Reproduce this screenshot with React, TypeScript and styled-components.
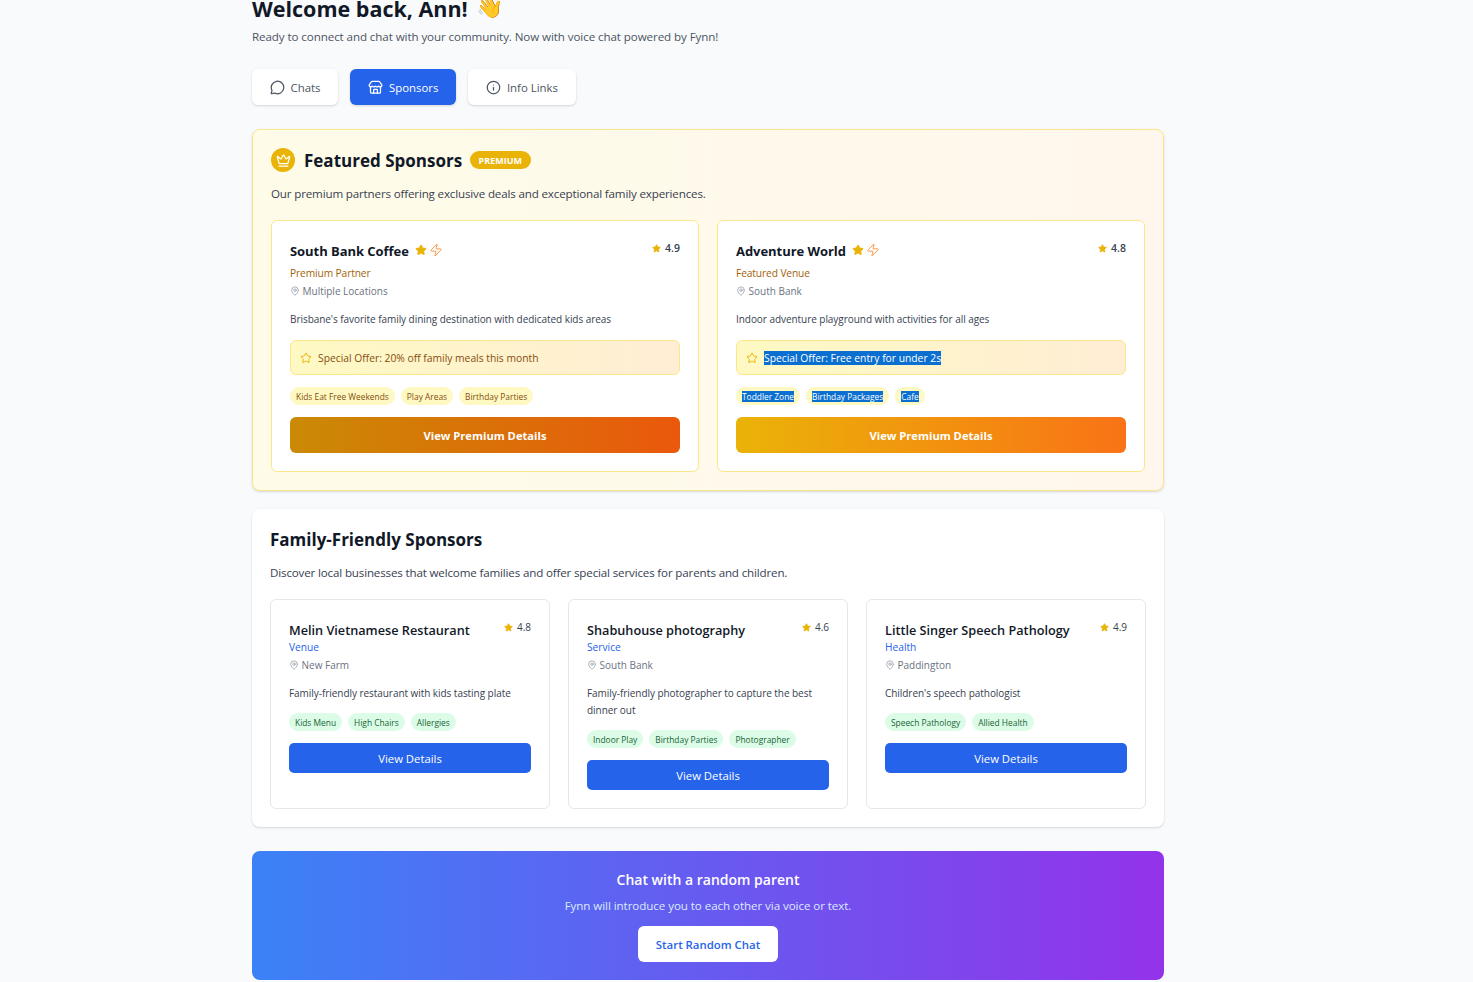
import React from 'react';
import styled, { createGlobalStyle } from 'styled-components';
import { MessageCircle, Store, Info, Crown, Star, Zap, MapPin } from 'lucide-react';

const Global = createGlobalStyle`
  html, body { margin: 0; padding: 0; background: #f9fafb; overflow: hidden; height: 982px; }
  body { font-family: "Open Sans", "Noto Sans", sans-serif; color: #111827; }
  * { box-sizing: border-box; }
`;

const Page = styled.main`
  width: 912px;
  margin: -7px 0 0 252px;
  display: flex;
  flex-direction: column;
`;
const Title = styled.h1`
  margin: 0;
  font-size: 21.5px;
  line-height: 32px;
  font-weight: 700;
  color: #111827;
  display: flex;
  gap: 9px;
`;
const Wave = styled.span`
  font-size: 22px;
  line-height: 28px;
  font-family: "Noto Color Emoji", sans-serif;
`;
const Subtitle = styled.p`
  margin: 2px 0 0;
  font-size: 11.6px;
  letter-spacing: -0.09px;
  line-height: 20px;
  color: #4b5563;
`;
const Tabs = styled.nav`
  display: flex;
  gap: 12px;
  margin-top: 22px;
`;
const Tab = styled.div<{ $active?: boolean }>`
  height: 36px;
  padding: 0 18px;
  display: flex;
  align-items: center;
  gap: 5.5px;
  border-radius: 6px;
  font-size: 11.4px;
  color: ${p => (p.$active ? '#fff' : '#4b5563')};
  background: ${p => (p.$active ? '#2563eb' : '#fff')};
  box-shadow: 0 1px 3px rgba(0,0,0,.1), 0 1px 2px rgba(0,0,0,.06);
`;
const Featured = styled.section`
  margin-top: 24px;
  height: 362px;
  padding: 18px;
  border: 1px solid #fde68a;
  border-radius: 8px;
  background: linear-gradient(90deg, #fefce8, #fff7ed);
  box-shadow: 0 1px 3px rgba(0,0,0,.1), 0 1px 2px rgba(0,0,0,.06);
`;
const FeaturedHead = styled.div`
  display: flex;
  align-items: center;
  height: 24px;
`;
const CrownBadge = styled.span`
  width: 24px;
  height: 24px;
  border-radius: 50%;
  background: #eab308;
  color: #fff;
  display: flex;
  align-items: center;
  justify-content: center;
  margin-right: 9px;
`;
const SectionTitle = styled.h2`
  margin: 0;
  padding-top: 1px;
  font-size: 17px;
  line-height: 23px;
  font-weight: 700;
  color: #111827;
`;
const Premium = styled.span`
  margin-left: 8px;
  height: 18px;
  padding: 0 8.5px;
  border-radius: 9px;
  background: #eab308;
  color: #fff;
  font-size: 9px;
  font-weight: 700;
  display: flex;
  align-items: center;
`;
const SectionText = styled.p`
  margin: 12px 0 0;
  font-size: 11.6px;
  letter-spacing: -0.16px;
  line-height: 20px;
  color: #374151;
`;
const TwoCols = styled.div`
  display: grid;
  grid-template-columns: 428px 428px;
  gap: 18px;
  margin-top: 16px;
`;
const PremiumCard = styled.article`
  height: 252px;
  padding: 18px;
  background: #fff;
  border: 1px solid #fde68a;
  border-radius: 6px;
`;
const CardTop = styled.div`
  display: flex;
  justify-content: space-between;
  align-items: flex-start;
`;
const NameRow = styled.div`
  display: flex;
  align-items: center;
  height: 24px;
`;
const Marks = styled.div`
  display: flex;
  align-items: center;
  gap: 2px;
  margin: 0 0 3px 6px;
`;
const CardName = styled.h3<{ $bold?: boolean }>`
  margin: 0;
  font-size: ${p => (p.$bold ? '13px' : '12.7px')};
  letter-spacing: ${p => (p.$bold ? '-0.05px' : '0')};
  line-height: 24px;
  font-weight: ${p => (p.$bold ? 700 : 600)};
  color: #111827;
`;
const Rating = styled.div<{ $bold?: boolean }>`
  display: flex;
  align-items: center;
  gap: 4px;
  margin-top: 1px;
  font-size: ${p => (p.$bold ? '10.5px' : '10px')};
  line-height: 16px;
  font-weight: ${p => (p.$bold ? 600 : 400)};
  color: #374151;
`;
const Kind = styled.div<{ $premium?: boolean }>`
  font-size: 10.2px;
  letter-spacing: ${p => (p.$premium ? '-0.1px' : '0')};
  line-height: 16px;
  font-weight: ${p => (p.$premium ? 500 : 400)};
  color: ${p => (p.$premium ? '#a16207' : '#2563eb')};
  margin-top: ${p => (p.$premium ? '2px' : '-3px')};
`;
const Location = styled.div`
  display: flex;
  align-items: center;
  gap: 2.5px;
  margin-top: 2px;
  font-size: 10px;
  line-height: 16px;
  color: #6b7280;
`;
const Desc = styled.p`
  margin: 12px 0 0;
  font-size: 10px;
  letter-spacing: -0.05px;
  line-height: 17px;
  color: #374151;
`;
const Offer = styled.div`
  margin-top: 12px;
  height: 35px;
  padding: 0 9px;
  display: flex;
  align-items: center;
  gap: 6px;
  border: 1px solid #fde68a;
  border-radius: 6px;
  background: linear-gradient(90deg, #fef9c3, #ffedd5);
  font-size: 10.3px;
  font-weight: 500;
  color: #854d0e;
`;
const Chips = styled.div<{ $tight?: boolean }>`
  display: flex;
  gap: 6px;
  margin-top: ${p => (p.$tight ? '11px' : '12px')};
`;
const Chip = styled.span<{ $green?: boolean }>`
  height: 18px;
  padding: 0 6px;
  display: flex;
  align-items: center;
  border-radius: 9px;
  font-size: 8.4px;
  background: ${p => (p.$green ? '#dcfce7' : '#fef9c3')};
  color: ${p => (p.$green ? '#166534' : '#854d0e')};
`;
const Selected = styled.span`
  background: #0a6fd1;
  color: #fff;
`;
const PremiumButton = styled.div<{ $from: string; $to: string }>`
  margin-top: 12px;
  height: 36px;
  border-radius: 6px;
  display: flex;
  align-items: center;
  justify-content: center;
  color: #fff;
  font-size: 11.2px;
  font-weight: 700;
  background: linear-gradient(90deg, ${p => p.$from}, ${p => p.$to});
`;
const Family = styled.section`
  margin-top: 18px;
  height: 318px;
  padding: 18px;
  background: #fff;
  border-radius: 8px;
  box-shadow: 0 1px 3px rgba(0,0,0,.1), 0 1px 2px rgba(0,0,0,.06);
`;
const ThreeCols = styled.div`
  display: grid;
  grid-template-columns: repeat(3, 280px);
  gap: 18px;
  margin-top: 16px;
`;
const SponsorCard = styled.article`
  height: 210px;
  padding: 18px;
  border: 1px solid #e5e7eb;
  border-radius: 6px;
  background: #fff;
`;
const DetailsButton = styled.div`
  margin-top: 12px;
  height: 30px;
  border-radius: 5px;
  background: #2563eb;
  color: #fff;
  font-size: 11.3px;
  display: flex;
  align-items: center;
  justify-content: center;
`;
const Cta = styled.section`
  margin-top: 24px;
  height: 129px;
  border-radius: 8px;
  background: linear-gradient(90deg, #3b82f6, #9333ea);
  display: flex;
  flex-direction: column;
  align-items: center;
  padding-top: 17px;
  color: #fff;
`;
const CtaTitle = styled.h3`
  margin: 0;
  font-size: 14px;
  line-height: 24px;
  font-weight: 600;
`;
const CtaText = styled.p`
  margin: 5px 0 0;
  font-size: 11.6px;
  letter-spacing: -0.07px;
  line-height: 18px;
  color: #dbeafe;
`;
const CtaButton = styled.div`
  margin-top: 11px;
  height: 36px;
  padding: 0 18px;
  border-radius: 6px;
  background: #fff;
  color: #2563eb;
  font-size: 11.4px;
  font-weight: 600;
  display: flex;
  align-items: center;
`;
const GoldStar = () => <Star size={12} color="#eab308" fill="#eab308" strokeWidth={2} />;
const SmallStar = () => <Star size={9} color="#eab308" fill="#eab308" strokeWidth={2} />;
const Pin = () => <MapPin size={10} color="#9ca3af" />;

type P = { name: string; kind: string; loc: string; desc: string; rating: string; offer: string; tags: string[]; from: string; to: string; sel?: boolean };
const premium: P[] = [
  { name: 'South Bank Coffee', kind: 'Premium Partner', loc: 'Multiple Locations', desc: "Brisbane's favorite family dining destination with dedicated kids areas", rating: '4.9', offer: 'Special Offer: 20% off family meals this month', tags: ['Kids Eat Free Weekends', 'Play Areas', 'Birthday Parties'], from: '#ca8a04', to: '#ea580c' },
  { name: 'Adventure World', kind: 'Featured Venue', loc: 'South Bank', desc: 'Indoor adventure playground with activities for all ages', rating: '4.8', offer: 'Special Offer: Free entry for under 2s', tags: ['Toddler Zone', 'Birthday Packages', 'Cafe'], from: '#eab308', to: '#f97316', sel: true },
];
const family = [
  { name: 'Melin Vietnamese Restaurant', kind: 'Venue', loc: 'New Farm', desc: 'Family-friendly restaurant with kids tasting plate', rating: '4.8', tags: ['Kids Menu', 'High Chairs', 'Allergies'] },
  { name: 'Shabuhouse photography', kind: 'Service', loc: 'South Bank', desc: 'Family-friendly photographer to capture the best dinner out', rating: '4.6', tags: ['Indoor Play', 'Birthday Parties', 'Photographer'] },
  { name: 'Little Singer Speech Pathology', kind: 'Health', loc: 'Paddington', desc: "Children's speech pathologist", rating: '4.9', tags: ['Speech Pathology', 'Allied Health'] },
];

export default function App() {
  return (
    <Page>
      <Global />
      <Title>Welcome back, Ann! <Wave>👋</Wave></Title>
      <Subtitle>Ready to connect and chat with your community. Now with voice chat powered by Fynn!</Subtitle>
      <Tabs>
        <Tab><MessageCircle size={15} />Chats</Tab>
        <Tab $active><Store size={15} />Sponsors</Tab>
        <Tab><Info size={15} />Info Links</Tab>
      </Tabs>
      <Featured>
        <FeaturedHead>
          <CrownBadge><Crown size={15} /></CrownBadge>
          <SectionTitle>Featured Sponsors</SectionTitle>
          <Premium>PREMIUM</Premium>
        </FeaturedHead>
        <SectionText>Our premium partners offering exclusive deals and exceptional family experiences.</SectionText>
        <TwoCols>
          {premium.map(c => (
            <PremiumCard key={c.name}>
              <CardTop>
                <NameRow>
                  <CardName $bold>{c.name}</CardName>
                  <Marks>
                    <GoldStar />
                    <Zap size={14} color="#fb923c" strokeWidth={1.6} />
                  </Marks>
                </NameRow>
                <Rating $bold><SmallStar />{c.rating}</Rating>
              </CardTop>
              <Kind $premium>{c.kind}</Kind>
              <Location><Pin />{c.loc}</Location>
              <Desc>{c.desc}</Desc>
              <Offer>
                <Star size={12} color="#eab308" />
                {c.sel ? <Selected>{c.offer}</Selected> : c.offer}
              </Offer>
              <Chips>
                {c.tags.map(t => <Chip key={t}>{c.sel ? <Selected>{t}</Selected> : t}</Chip>)}
              </Chips>
              <PremiumButton $from={c.from} $to={c.to}>View Premium Details</PremiumButton>
            </PremiumCard>
          ))}
        </TwoCols>
      </Featured>
      <Family>
        <SectionTitle>Family-Friendly Sponsors</SectionTitle>
        <SectionText>Discover local businesses that welcome families and offer special services for parents and children.</SectionText>
        <ThreeCols>
          {family.map(c => (
            <SponsorCard key={c.name}>
              <CardTop>
                <CardName>{c.name}</CardName>
                <Rating><SmallStar />{c.rating}</Rating>
              </CardTop>
              <Kind>{c.kind}</Kind>
              <Location><Pin />{c.loc}</Location>
              <Desc>{c.desc}</Desc>
              <Chips $tight>
                {c.tags.map(t => <Chip $green key={t}>{t}</Chip>)}
              </Chips>
              <DetailsButton>View Details</DetailsButton>
            </SponsorCard>
          ))}
        </ThreeCols>
      </Family>
      <Cta>
        <CtaTitle>Chat with a random parent</CtaTitle>
        <CtaText>Fynn will introduce you to each other via voice or text.</CtaText>
        <CtaButton>Start Random Chat</CtaButton>
      </Cta>
    </Page>
  );
}
